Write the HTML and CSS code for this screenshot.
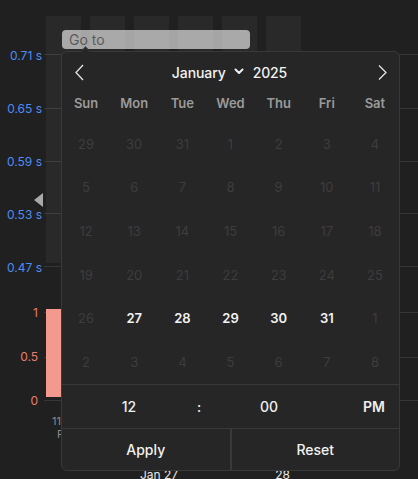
FILE: index.html
```html
<!DOCTYPE html>
<html>
<head>
<meta charset="utf-8">
<link rel="stylesheet" href="styles.css">
</head>
<body>
<div class="page">
  <section class="chart chart-top">
    <div class="axis axis-top">
      <span>0.71 s</span><span>0.65 s</span><span>0.59 s</span><span>0.53 s</span><span>0.47 s</span>
    </div>
    <div class="plot plot-top">
      <div class="bar"></div><div class="bar"></div><div class="bar"></div>
      <div class="bar"></div><div class="bar"></div><div class="bar"></div>
    </div>
  </section>
  <section class="chart chart-bottom">
    <div class="axis axis-bottom"><span>1</span><span>0.5</span><span>0</span></div>
    <div class="plot plot-bottom">
      <div class="bars2"><div class="bar2"></div></div>
      <div class="xlabels">
        <span class="xl1">11:00 PM</span>
        <span class="xl2">Fri</span>
      </div>
      <div class="axisline"></div>
      <div class="xdates"><span class="d1">Jan 27</span><span class="d2">28</span></div>
    </div>
  </section>

  <div class="marker"></div>
  <input class="goto" type="text" placeholder="Go to">

  <div class="popover">
    <div class="cal-head">
      <button class="nav"><svg width="9" height="17" viewBox="0 0 9 17"><path d="M8 1 L1 8.5 L8 16" fill="none" stroke="#e4e4e4" stroke-width="1.3"/></svg></button>
      <div class="title">
        <span class="month">January</span>
        <svg class="chev" width="10" height="7" viewBox="0 0 10 7"><path d="M1.5 1.5 L5 5 L8.5 1.5" fill="none" stroke="#f0f0f0" stroke-width="2" stroke-linecap="round" stroke-linejoin="round"/></svg>
        <span class="year">2025</span>
      </div>
      <button class="nav"><svg width="9" height="17" viewBox="0 0 9 17"><path d="M1 1.5 L8 8.5 L1 15.5" fill="none" stroke="#e4e4e4" stroke-width="1.3"/></svg></button>
    </div>
    <div class="weekdays">
      <span>Sun</span><span>Mon</span><span>Tue</span><span>Wed</span><span>Thu</span><span>Fri</span><span>Sat</span>
    </div>
    <div class="days">
      <span>29</span><span>30</span><span>31</span><span>1</span><span>2</span><span>3</span><span>4</span>
      <span>5</span><span>6</span><span>7</span><span>8</span><span>9</span><span>10</span><span>11</span>
      <span>12</span><span>13</span><span>14</span><span>15</span><span>16</span><span>17</span><span>18</span>
      <span>19</span><span>20</span><span>21</span><span>22</span><span>23</span><span>24</span><span>25</span>
      <span>26</span><span class="on">27</span><span class="on">28</span><span class="on">29</span><span class="on">30</span><span class="on">31</span><span>1</span>
      <span>2</span><span>3</span><span>4</span><span>5</span><span>6</span><span>7</span><span>8</span>
    </div>
    <div class="time">
      <span>12</span><span>:</span><span>00</span><span></span><span class="ampm">PM</span>
    </div>
    <div class="actions">
      <button class="btn btn-apply">Apply</button>
      <button class="btn btn-reset">Reset</button>
    </div>
  </div>
</div>
</body>
</html>
```

FILE: styles.css
```css
* { box-sizing: border-box; margin: 0; padding: 0; }
html, body { width: 418px; height: 479px; overflow: hidden; }
body {
  background: #202020;
  font-family: Inter, "Noto Sans", sans-serif;
  color: #eeeeee;
}
.page { position: relative; width: 418px; height: 479px; }

/* charts */
.chart { display: flex; }
.chart-top { height: 290px; }
.chart-bottom { height: 189px; }

.axis {
  width: 44px;
  display: flex;
  flex-direction: column;
  align-items: flex-end;
  font-size: 12px;
  line-height: 14px;
}
.axis-top { padding-top: 49px; gap: 39px; padding-right: 2px; color: #4d8df6; }
.axis-bottom { padding-top: 16px; gap: 30px; padding-right: 6px; color: #ee7b6a; }

.plot { flex: 1; }
.plot-top {
  display: flex;
  align-items: flex-start;
  gap: 9px;
  padding: 16px 0 0 2px;
  background-image:
    linear-gradient(#363636, #363636), linear-gradient(#363636, #363636),
    linear-gradient(#363636, #363636), linear-gradient(#363636, #363636),
    linear-gradient(#363636, #363636);
  background-repeat: no-repeat;
  background-size: 100% 1px;
  background-position: 0 54px, 0 108px, 0 161px, 0 213px, 0 266px;
}
.bar { width: 35px; height: 247px; background: rgba(255, 255, 255, 0.045); }

.plot-bottom {
  display: flex;
  flex-direction: column;
  background-image:
    linear-gradient(#363636, #363636), linear-gradient(#363636, #363636),
    linear-gradient(#363636, #363636);
  background-repeat: no-repeat;
  background-size: 100% 1px;
  background-position: 0 22px, 0 67px, 0 110px;
}
.bars2 { height: 107px; padding: 19px 0 0 2px; }
.bar2 { width: 35px; height: 88px; background: #f4998d; }

.xlabels {
  margin-top: 18px;
  display: flex;
  flex-direction: column;
  font-size: 11px;
  line-height: 13px;
  color: #8a8a8a;
  white-space: nowrap;
}
.xl1 { padding-left: 8px; }
.xl2 { padding-left: 13px; }
.axisline { margin: 28px 0 0 3px; width: 300px; height: 1px; background: #444444; }
.xdates {
  margin-top: -1px;
  display: flex;
  font-size: 12px;
  line-height: 14px;
  color: #e6e6e6;
  white-space: nowrap;
}
.d1 { margin-left: 96px; }
.d2 { margin-left: 97px; }

/* overlays */
.marker {
  position: absolute;
  left: 34px;
  top: 193px;
  width: 0;
  height: 0;
  border-top: 7px solid transparent;
  border-bottom: 7px solid transparent;
  border-right: 9px solid #a9a9a9;
}
.goto {
  position: absolute;
  left: 62px;
  top: 30px;
  width: 188px;
  height: 19px;
  border: none;
  outline: none;
  border-radius: 4px;
  background: rgba(255, 255, 255, 0.6);
  padding-left: 7px;
  font-family: Inter, "Noto Sans", sans-serif;
  font-size: 14px;
  color: #333;
}
.goto::placeholder { color: #5c5c5c; }

.popover {
  position: absolute;
  left: 61px;
  top: 51px;
  width: 339px;
  height: 420px;
  background: #262626;
  border: 1px solid #393939;
  border-radius: 6px;
  display: flex;
  flex-direction: column;
  z-index: 2;
}
.popover::before {
  content: "";
  position: absolute;
  left: 20px;
  top: -4px;
  width: 6px;
  height: 6px;
  background: #262626;
  border-top: 1px solid #393939;
  border-left: 1px solid #393939;
  transform: rotate(45deg);
}

.cal-head {
  height: 40px;
  display: grid;
  grid-template-columns: 9px 1fr 9px;
  align-items: center;
  padding: 0 12px 0 13px;
}
.nav { background: none; border: none; display: flex; }
.title {
  justify-self: center;
  margin-right: 3px;
  display: flex;
  align-items: center;
  font-size: 14px;
  font-weight: 500;
  color: #f2f2f2;
  letter-spacing: -0.1px;
}
.chev { margin: 0 9px 1px 8px; }

.weekdays {
  height: 30px;
  padding-bottom: 8px;
  display: grid;
  grid-template-columns: repeat(7, 1fr);
  align-items: center;
  font-size: 13px;
  font-weight: 600;
  color: #9a9a9a;
  text-align: center;
}

.days {
  height: 262px;
  display: grid;
  grid-template-columns: repeat(7, 1fr);
  grid-template-rows: repeat(6, 1fr);
  align-items: center;
  text-align: center;
  font-size: 13px;
  color: #3d3d3d;
}
.days .on { color: #f2f2f2; font-weight: 600; }

.time {
  height: 44px;
  border-top: 1px solid #393939;
  display: grid;
  grid-template-columns: 70px 70px 70px 1fr 50px;
  padding-left: 32px;
  align-items: center;
  text-align: center;
  font-size: 14px;
  font-weight: 500;
  color: #efefef;
}
.time .ampm { font-weight: 600; }

.actions {
  flex: 1;
  border-top: 1px solid #393939;
  display: grid;
  grid-template-columns: 1fr 1fr;
}
.btn {
  background: none;
  border: none;
  font-family: Inter, "Noto Sans", sans-serif;
  font-size: 14px;
  font-weight: 500;
  color: #f2f2f2;
}
.btn-apply { border-right: 1px solid #393939; }
.btn-reset { border-left: 1px solid #393939; }
```
